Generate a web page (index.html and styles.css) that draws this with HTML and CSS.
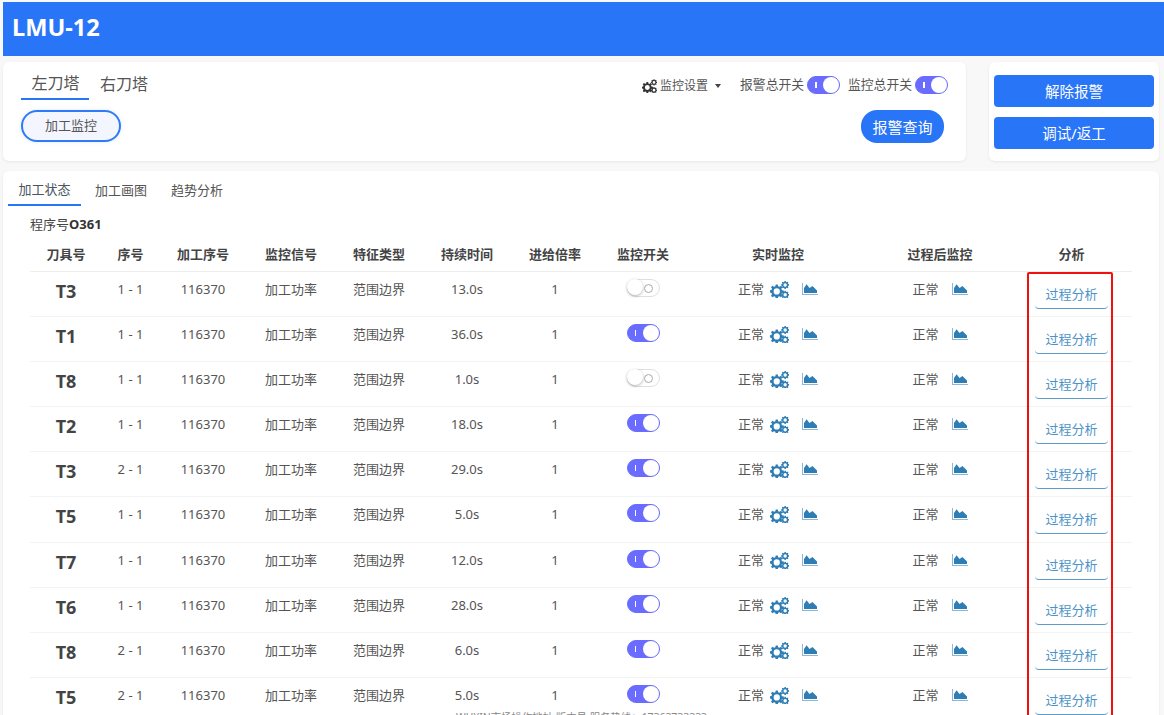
FILE: index.html
```html
<!DOCTYPE html>
<html lang="zh-CN">
<head>
<meta charset="utf-8">
<title>LMU-12</title>
<link rel="stylesheet" href="styles.css">
</head>
<body>
<svg class="defs" width="0" height="0" aria-hidden="true">
  <symbol id="gears" viewBox="0 0 20 18">
    <path fill-rule="evenodd" d="M6 3.600h2.200l.4 2 1.300.6 1.700-1.100 1.500 1.500-1.100 1.700.6 1.400 2 .4v2.200l-2 .4-.6 1.400 1.100 1.700-1.500 1.500-1.700-1.100-1.300.6-.4 2H6l-.4-2-1.400-.6-1.700 1.100L1 15.700l1.100-1.700-.6-1.400-2-.4V10l2-.4.6-1.400L1 6.500 2.500 5l1.700 1.100 1.400-.6zM7.100 7.800a3.300 3.300 0 1 0 0 6.600 3.300 3.300 0 0 0 0-6.600z"/>
    <path fill-rule="evenodd" d="M15.300 0h1.400l.2 1 .7.3.9-.6 1 1-.6.9.3.7 1 .2v1.400l-1 .2-.3.7.6.9-1 1-.9-.6-.7.3-.2 1h-1.400l-.2-1-.7-.3-.9.6-1-1 .6-.9-.3-.7-1-.2V3.500l1-.2.3-.7-.6-.9 1-1 .9.6.7-.3zM16 2.400a1.800 1.800 0 1 0 0 3.600 1.800 1.800 0 0 0 0-3.600z"/>
    <path fill-rule="evenodd" d="M15.300 10.400h1.400l.2 1 .7.3.9-.6 1 1-.6.9.3.7 1 .2v1.400l-1 .2-.3.7.6.9-1 1-.9-.6-.7.3-.2 1h-1.400l-.2-1-.7-.3-.9.6-1-1 .6-.9-.3-.7-1-.2v-1.400l1-.2.3-.7-.6-.9 1-1 .9.6.7-.3zM16 12.800a1.800 1.800 0 1 0 0 3.600 1.800 1.800 0 0 0 0-3.600z"/>
  </symbol>
  <symbol id="area" viewBox="0 0 16 12">
    <path d="M0 0h1v11h15v1H0z" opacity=".55"/>
    <path d="M2 10V5L4.600 1.200 7.500 5 10.500 3 15 7.500V10z"/>
  </symbol>
</svg>

<header class="topbar">LMU-12</header>

<section class="controls">
  <div class="card control-card">
    <div class="control-left">
      <nav class="turrets">
        <span class="turret turret-active">左刀塔</span>
        <span class="turret">右刀塔</span>
      </nav>
      <button class="pill-mode">加工监控</button>
    </div>
    <div class="control-right">
      <div class="switches">
        <span class="settings"><svg class="ico-settings"><use href="#gears"/></svg>监控设置<i class="caret"></i></span>
        <span class="switch-label">报警总开关</span>
        <span class="toggle on"></span>
        <span class="switch-label second">监控总开关</span>
        <span class="toggle on"></span>
      </div>
      <button class="pill-query">报警查询</button>
    </div>
  </div>
  <div class="card action-card">
    <button class="action">解除报警</button>
    <button class="action">调试/返工</button>
  </div>
</section>

<main class="card main-card">
  <nav class="subtabs">
    <span class="subtab subtab-active">加工状态</span>
    <span class="subtab">加工画图</span>
    <span class="subtab">趋势分析</span>
  </nav>
  <p class="program">程序号<b>O361</b></p>
  <div class="table-wrap">
    <table class="grid">
      <colgroup>
        <col class="c-tool"><col class="c-seq"><col class="c-std"><col class="c-std"><col class="c-std"><col class="c-std"><col class="c-std"><col class="c-std"><col class="c-live"><col class="c-post"><col class="c-an">
      </colgroup>
      <thead>
        <tr><th>刀具号</th><th>序号</th><th>加工序号</th><th>监控信号</th><th>特征类型</th><th>持续时间</th><th>进给倍率</th><th>监控开关</th><th>实时监控</th><th>过程后监控</th><th>分析</th></tr>
      </thead>
      <tbody>
        <tr><td class="tool">T3</td><td>1 - 1</td><td>116370</td><td>加工功率</td><td>范围边界</td><td>13.0s</td><td>1</td><td><span class="toggle"></span></td><td><span class="st">正常</span><svg class="ico-gear"><use href="#gears"/></svg><svg class="ico-area"><use href="#area"/></svg></td><td><span class="st">正常</span><svg class="ico-area"><use href="#area"/></svg></td><td><button class="analyze">过程分析</button></td></tr>
        <tr><td class="tool">T1</td><td>1 - 1</td><td>116370</td><td>加工功率</td><td>范围边界</td><td>36.0s</td><td>1</td><td><span class="toggle on"></span></td><td><span class="st">正常</span><svg class="ico-gear"><use href="#gears"/></svg><svg class="ico-area"><use href="#area"/></svg></td><td><span class="st">正常</span><svg class="ico-area"><use href="#area"/></svg></td><td><button class="analyze">过程分析</button></td></tr>
        <tr><td class="tool">T8</td><td>1 - 1</td><td>116370</td><td>加工功率</td><td>范围边界</td><td>1.0s</td><td>1</td><td><span class="toggle"></span></td><td><span class="st">正常</span><svg class="ico-gear"><use href="#gears"/></svg><svg class="ico-area"><use href="#area"/></svg></td><td><span class="st">正常</span><svg class="ico-area"><use href="#area"/></svg></td><td><button class="analyze">过程分析</button></td></tr>
        <tr><td class="tool">T2</td><td>1 - 1</td><td>116370</td><td>加工功率</td><td>范围边界</td><td>18.0s</td><td>1</td><td><span class="toggle on"></span></td><td><span class="st">正常</span><svg class="ico-gear"><use href="#gears"/></svg><svg class="ico-area"><use href="#area"/></svg></td><td><span class="st">正常</span><svg class="ico-area"><use href="#area"/></svg></td><td><button class="analyze">过程分析</button></td></tr>
        <tr><td class="tool">T3</td><td>2 - 1</td><td>116370</td><td>加工功率</td><td>范围边界</td><td>29.0s</td><td>1</td><td><span class="toggle on"></span></td><td><span class="st">正常</span><svg class="ico-gear"><use href="#gears"/></svg><svg class="ico-area"><use href="#area"/></svg></td><td><span class="st">正常</span><svg class="ico-area"><use href="#area"/></svg></td><td><button class="analyze">过程分析</button></td></tr>
        <tr class="row-tall"><td class="tool">T5</td><td>1 - 1</td><td>116370</td><td>加工功率</td><td>范围边界</td><td>5.0s</td><td>1</td><td><span class="toggle on"></span></td><td><span class="st">正常</span><svg class="ico-gear"><use href="#gears"/></svg><svg class="ico-area"><use href="#area"/></svg></td><td><span class="st">正常</span><svg class="ico-area"><use href="#area"/></svg></td><td><button class="analyze">过程分析</button></td></tr>
        <tr><td class="tool">T7</td><td>1 - 1</td><td>116370</td><td>加工功率</td><td>范围边界</td><td>12.0s</td><td>1</td><td><span class="toggle on"></span></td><td><span class="st">正常</span><svg class="ico-gear"><use href="#gears"/></svg><svg class="ico-area"><use href="#area"/></svg></td><td><span class="st">正常</span><svg class="ico-area"><use href="#area"/></svg></td><td><button class="analyze">过程分析</button></td></tr>
        <tr><td class="tool">T6</td><td>1 - 1</td><td>116370</td><td>加工功率</td><td>范围边界</td><td>28.0s</td><td>1</td><td><span class="toggle on"></span></td><td><span class="st">正常</span><svg class="ico-gear"><use href="#gears"/></svg><svg class="ico-area"><use href="#area"/></svg></td><td><span class="st">正常</span><svg class="ico-area"><use href="#area"/></svg></td><td><button class="analyze">过程分析</button></td></tr>
        <tr><td class="tool">T8</td><td>2 - 1</td><td>116370</td><td>加工功率</td><td>范围边界</td><td>6.0s</td><td>1</td><td><span class="toggle on"></span></td><td><span class="st">正常</span><svg class="ico-gear"><use href="#gears"/></svg><svg class="ico-area"><use href="#area"/></svg></td><td><span class="st">正常</span><svg class="ico-area"><use href="#area"/></svg></td><td><button class="analyze">过程分析</button></td></tr>
        <tr><td class="tool">T5</td><td>2 - 1</td><td>116370</td><td>加工功率</td><td>范围边界</td><td>5.0s</td><td>1</td><td><span class="toggle on"></span></td><td><span class="st">正常</span><svg class="ico-gear"><use href="#gears"/></svg><svg class="ico-area"><use href="#area"/></svg></td><td><span class="st">正常</span><svg class="ico-area"><use href="#area"/></svg></td><td><button class="analyze">过程分析</button></td></tr>
      </tbody>
    </table>
    <div class="highlight"></div>
  </div>
</main>
<div class="footnote">WUXIN市场操作地址 版本号 服务热线：17363733333</div>
</body>
</html>
```
FILE: styles.css
```css
* { box-sizing: border-box; }
html, body { height: 715px; overflow: hidden; }
body {
  margin: 0;
  padding: 2px 0 0 3px;
  position: relative;
  background: #f8f8f8;
  color: #444;
  font: 13px/1.4 "Noto Sans", "Noto Sans CJK SC", sans-serif;
}
button { font-family: inherit; cursor: pointer; }
.defs { position: absolute; }

.topbar {
  height: 54px;
  padding-left: 9px;
  background: #2975f7;
  color: #fff;
  font-size: 23.600px;
  font-weight: 700;
  line-height: 50px;
}

.controls {
  display: flex;
  gap: 23px;
  margin-top: 6px;
  padding-right: 5px;
}
.card {
  background: #fff;
  border-radius: 6px;
  box-shadow: 0 1px 3px rgba(0, 0, 0, .07);
}
.control-card {
  flex: 0 0 963px;
  height: 99px;
  display: flex;
  justify-content: space-between;
  padding: 7px 18px 0;
}
.turrets { display: flex; height: 31px; }
.turret {
  width: 68px;
  font-size: 16px;
  line-height: 28px;
  text-align: center;
  color: #555;
  padding-top: 1px;
}
.turret-active { border-bottom: 2px solid #2975f7; padding-top: 0; padding-left: 1px; }
.turret + .turret { margin-left: 1px; }
.pill-mode {
  display: block;
  width: 100px;
  height: 32px;
  margin-top: 10px;
  padding: 0 0 3px;
  border: 2px solid #2f7bf5;
  border-radius: 16px;
  background: #f4f6ff;
  color: #555;
  font-size: 13px;
  box-shadow: 0 0 4px rgba(41, 117, 247, .15);
}
.control-right {
  display: flex;
  flex-direction: column;
  align-items: flex-end;
}
.switches {
  display: flex;
  align-items: center;
  height: 32px;
  margin-top: 0;
  color: #555;
}
.settings {
  display: flex;
  align-items: center;
  font-size: 12px;
  margin: 2px 19px 0 0;
}
.ico-settings { width: 15px; height: 14px; margin-right: 3px; fill: #333; }
.caret {
  margin-left: 7px;
  border: 3.500px solid transparent;
  border-top: 4px solid #444;
  border-bottom: 0;
}
.switch-label { margin-right: 3px; font-size: 12.800px; }
.switch-label.second { margin-left: 8px; }
.toggle {
  position: relative;
  display: inline-block;
  width: 33px;
  height: 18px;
  border: 1px solid #dfdfdf;
  border-radius: 9px;
  background: #fff;
  vertical-align: top;
}
.toggle::before {
  content: "";
  position: absolute;
  left: -1px;
  top: -1px;
  width: 16px;
  height: 16px;
  border-radius: 50%;
  background: #fff;
  box-shadow: 0 1px 3px rgba(0, 0, 0, .3);
}
.toggle::after {
  content: "";
  position: absolute;
  right: 6px;
  top: 4.500px;
  width: 7px;
  height: 7px;
  border: 1.500px solid #aaa;
  border-radius: 50%;
}
.toggle.on { background: #6a6cff; border-color: #6a6cff; }
.toggle.on::before { left: auto; right: 0; top: 0; box-shadow: none; }
.toggle.on::after {
  right: auto;
  left: 7px;
  top: 5px;
  width: 1.500px;
  height: 6px;
  border: 0;
  border-radius: 0;
  background: #fff;
}
.pill-query {
  width: 83px;
  height: 33px;
  margin: 9px 4px 0 0;
  border: 0;
  border-radius: 16px;
  background: #2975f7;
  color: #fff;
  font-size: 15px;
}
.action-card {
  flex: 0 0 170px;
  height: 99px;
  padding: 13px 5px 0;
}
.action {
  display: block;
  width: 160px;
  height: 32px;
  margin-bottom: 10px;
  padding: 0 0 2px;
  border: 0;
  border-radius: 4px;
  background: #2975f7;
  color: #fff;
  font-size: 14.500px;
}

.main-card {
  width: 1156px;
  height: 560px;
  margin-top: 10px;
  padding: 5px 0 0 5px;
  overflow: hidden;
}
.subtabs { display: flex; height: 30px; }
.subtab {
  width: 52px;
  line-height: 26px;
  text-align: center;
  color: #555;
  padding-top: 1px;
  margin-right: 24px;
}
.subtab-active {
  width: 73px;
  margin-right: 14px;
  padding-top: 0;
  border-bottom: 2px solid #2975f7;
  color: #4a5560;
}
.program { margin: 8px 0 0 22px; line-height: 20px; color: #444; }
.program b { color: #333; }

.table-wrap { position: relative; width: 1102px; margin: 3px 0 0 22px; }
.grid {
  width: 1102px;
  table-layout: fixed;
  border-collapse: collapse;
  text-align: center;
}
.c-tool { width: 72px; }
.c-seq { width: 57px; }
.c-std { width: 88px; }
.c-live { width: 182px; }
.c-post { width: 142px; }
.c-an { width: 121px; }
.grid th {
  height: 34px;
  padding: 0;
  font-size: 13px;
  font-weight: 700;
  color: #444;
  border-bottom: 1px solid #eee;
  vertical-align: middle;
}
.grid td {
  height: 45px;
  padding: 7px 0 0;
  border-bottom: 1px solid #f3f3f3;
  vertical-align: top;
  color: #555;
  line-height: 20px;
  white-space: nowrap;
}
.grid .row-tall td { height: 46px; }
.grid .tool {
  padding-top: 6px;
  font-size: 18px;
  font-weight: 700;
  color: #444;
  line-height: 26px;
}
.st { vertical-align: top; }
.grid svg { vertical-align: top; }
.ico-gear { width: 19px; height: 17px; margin: 2px 0 0 6px; fill: #2e7eb5; }
.ico-area { width: 16px; height: 12px; margin: 4px 0 0 13px; fill: #2e7eb5; }
.analyze {
  display: block;
  width: 73px;
  height: 31px;
  margin: -1px auto 0;
  padding: 0;
  border: 0;
  border-bottom: 1px solid #5d9bc9;
  border-radius: 0 0 4px 4px;
  background: #fff;
  color: #4d93c7;
  font-size: 13px;
  line-height: 32px;
}
.highlight {
  position: absolute;
  left: 997px;
  top: 35px;
  width: 86px;
  height: 480px;
  border: 2px solid #f01010;
  border-radius: 2px;
  pointer-events: none;
}
.footnote {
  position: absolute;
  left: 456px;
  top: 710px;
  font-size: 10.400px;
  line-height: 14px;
  color: #888;
}
```
